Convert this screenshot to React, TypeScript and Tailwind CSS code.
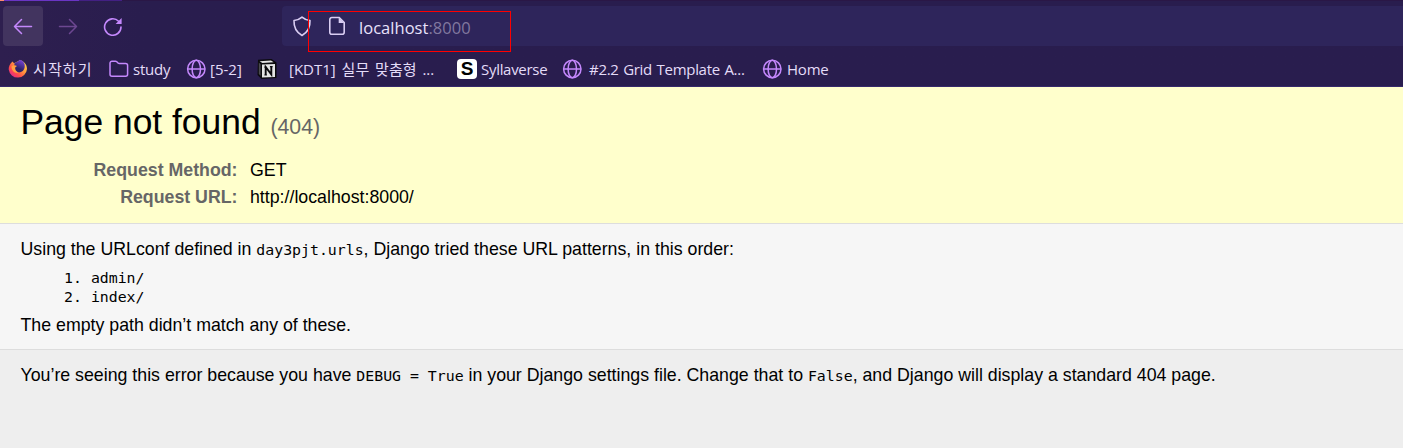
import type { ReactNode } from "react";

const accent = "#c488fc";

function Globe() {
  return (
    <svg width="20" height="20" viewBox="0 0 20 20" fill="none" stroke={accent} strokeWidth="1.5" className="shrink-0">
      <circle cx="10.3" cy="10" r="8.7" />
      <ellipse cx="10.3" cy="10" rx="4.2" ry="8.7" />
      <path d="M1.6 10h17.4" />
    </svg>
  );
}

function Folder() {
  return (
    <svg width="20" height="18" viewBox="0 0 20 18" fill="none" stroke={accent} strokeWidth="1.5" strokeLinejoin="round" className="shrink-0">
      <path d="M1 3.2a2 2 0 0 1 2-2h3.4a2 2 0 0 1 1.4.6L9 3a2 2 0 0 0 1.4.6H16.600a2 2 0 0 1 2 2v8.600a2 2 0 0 1-2 2H3a2 2 0 0 1-2-2z" />
    </svg>
  );
}

function Firefox() {
  return (
    <svg width="20" height="20" viewBox="0 0 20 20" className="shrink-0">
      <defs>
        <linearGradient id="flame" x1="0.85" y1="0.1" x2="0.15" y2="0.85">
          <stop offset="0" stopColor="#ffd84a" />
          <stop offset="0.4" stopColor="#ff9a3c" />
          <stop offset="0.75" stopColor="#ff4b4b" />
          <stop offset="1" stopColor="#e8307e" />
        </linearGradient>
        <linearGradient id="orb" x1="0.7" y1="0" x2="0.3" y2="1">
          <stop offset="0" stopColor="#7a45dc" />
          <stop offset="0.7" stopColor="#2c2268" />
        </linearGradient>
      </defs>
      <path d="M4.500 2.400 6 4.200C8 2.800 10 3 11.500 1c4 .8 7.500 4 7.500 9a9.200 9.200 0 0 1-18.300.6C.5 7.500 2 4.800 4.500 2.400z" fill="url(#flame)" />
      <path d="M6.500 4.200C8.500 3 10.500 2.500 11.800.8c3.600 1 5.400 4 4.900 7.200-.5 3.400-3 5.500-5.900 5.400-2.600 0-4.800-1.800-4.800-4.300C6 7 6.500 6 6.500 4.200z" fill="url(#orb)" />
      <path d="M3.500 7.500c1.500-1.500 3.500-1.800 5.500-.5L7.200 8.500c-.4 2.200 1 4.200 3.800 4.900-3 1.400-7.500-.7-7.500-5.900z" fill="#ffa040" />
    </svg>
  );
}

function Notion() {
  return (
    <svg width="20" height="20" viewBox="0 0 20 20" className="shrink-0">
      <path d="M1 .8 14.500 0 19.500 3.500v15.500L4.500 20 .5 16z" fill="#0b0a0d" />
      <path d="M2.600 2.200 14 1.500l2.600 1.700L5.400 4z" fill="#e4e4e4" />
      <path d="M5 5.600 18 4.900v13L5 18.600z" fill="#e4e4e4" />
      <path d="M1.800 3.600 3.600 5.200v11.600L1.800 15z" fill="#4a4a4e" />
      <path d="M8.700 16V8l5.600 7.400V7.600" fill="none" stroke="#0b0a0d" strokeWidth="1.900" />
      <path d="M7.400 8.100h2M12.900 7.700h2.700M7.400 16h2.500" fill="none" stroke="#0b0a0d" strokeWidth="1.200" />
    </svg>
  );
}

function Bookmark({ icon, children, className }: { icon: ReactNode; children: ReactNode; className: string }) {
  return (
    <div className={`flex h-full shrink-0 items-center whitespace-pre ${className}`}>
      {icon}
      <span>{children}</span>
    </div>
  );
}

function Toolbar() {
  return (
    <div className="flex h-[51px] items-start pt-[5px]">
      <div className="ml-[3px] flex size-10 items-center justify-center rounded bg-[#42345f]">
        <svg width="20" height="18" viewBox="0 0 20 18" fill="none" stroke={accent} strokeWidth="1.500" strokeLinecap="round" strokeLinejoin="round">
          <path d="M18.500 9.500H1.500M8.500 2.500 1.500 9.500l7 7" />
        </svg>
      </div>
      <div className="ml-[5px] flex size-10 items-center justify-center">
        <svg width="20" height="18" viewBox="0 0 20 18" fill="none" stroke="#6c4791" strokeWidth="1.500" strokeLinecap="round" strokeLinejoin="round">
          <path d="M1.500 9.500h17M11.500 2.500l7 7-7 7" />
        </svg>
      </div>
      <div className="ml-[5px] flex size-10 items-center justify-center">
        <svg width="20" height="20" viewBox="0 0 20 20" fill="none" stroke={accent} strokeWidth="1.600" strokeLinecap="round">
          <path d="M18 11A8.200 8.200 0 1 1 15.600 5.200" />
          <path d="M18.600 2v5.900h-6z" fill={accent} stroke="none" />
        </svg>
      </div>
      <div className="ml-[149px] flex h-10 flex-1 items-center rounded-l bg-[#2e255b] pl-[10px]">
        <svg width="20" height="21" viewBox="0 0 20 21" fill="none" stroke="#d9cdf2" strokeWidth="1.600" strokeLinejoin="round" className="shrink-0">
          <path d="M10 1.200C12 3 15 4.300 18 4.500c.3 6.600-2.200 11.700-8 15-5.800-3.300-8.300-8.400-8-15C5 4.300 8 3 10 1.200z" />
        </svg>
        <svg width="18" height="20" viewBox="0 0 18 20" className="ml-[16px] shrink-0">
          <path d="M3.800 1.500h7.400l5 5v9.800a2 2 0 0 1-2 2H3.800a2 2 0 0 1-2-2V3.500a2 2 0 0 1 2-2z" fill="none" stroke="#d9cdf2" strokeWidth="1.600" />
          <path d="M10.700 1.500v5.500h5.500z" fill="#d9cdf2" />
        </svg>
        <span className="ml-[13px] whitespace-pre pt-[3px] text-[16.500px] leading-5 tracking-[0.03px] text-[#e9e2fb]">
          localhost<span className="text-[#81789f]">:8000</span>
        </span>
      </div>
    </div>
  );
}

function Bookmarks() {
  return (
    <div className="flex h-[34px] items-center text-[15px] text-[#e4dcf8]">
      <Bookmark icon={<Firefox />} className="w-[101px] gap-[5px] pl-2 tracking-[1.100px]">시작하기</Bookmark>
      <Bookmark icon={<Folder />} className="w-[77px] gap-[4px] pl-[8px] tracking-[-0.2px]">study</Bookmark>
      <Bookmark icon={<Globe />} className="w-[71px] gap-[4px] pl-[8px]">[5-2]</Bookmark>
      <Bookmark icon={<Notion />} className="w-[200px] gap-[12px] pl-[8px] [word-spacing:2px]">[KDT1] 실무 맞춤형 ...</Bookmark>
      <Bookmark
        icon={<span className="flex size-5 items-center justify-center rounded bg-white font-['Liberation_Sans'] text-[19px] font-bold leading-5 text-black">S</span>}
        className="w-[106px] gap-[4px] pl-[8px] tracking-[-0.3px]"
      >
        Syllaverse
      </Bookmark>
      <Bookmark icon={<Globe />} className="w-[200px] gap-[7px] pl-[7px] tracking-[-0.3px] [word-spacing:1px]">#2.2 Grid Template A...</Bookmark>
      <Bookmark icon={<Globe />} className="gap-[5px] pl-[7px] tracking-[-0.2px]">Home</Bookmark>
    </div>
  );
}

function Code({ children }: { children: ReactNode }) {
  return <code className="font-['DejaVu_Sans_Mono',monospace] text-[14.850px] leading-none">{children}</code>;
}

export default function App() {
  return (
    <div className="flex h-[448px] w-[1403px] flex-col overflow-hidden bg-[#eeeeee] font-['Liberation_Sans',sans-serif] text-[17.760px] text-black">
      <header className="relative h-[87px] shrink-0 border-b border-[#36296b] bg-[#291d4e] bg-linear-to-r from-[#2e1f4f] from-0% to-[#291d4e] to-10% font-['Open_Sans','Noto_Sans_CJK_KR',sans-serif]">
        <div className="flex h-px bg-[#2a1746]">
          <div className="w-1 bg-[#ff8a70]" />
          <div className="w-[75px] bg-[#6a35c4]" />
          <div className="w-[43px] bg-[#432083]" />
        </div>
        <Toolbar />
        <Bookmarks />
        <div className="absolute left-[308px] top-[11px] h-[41px] w-[203px] border border-[#f00]" />
      </header>
      <section className="h-[137px] shrink-0 border-b border-[#dddddd] bg-[#ffffcc] pl-[20.500px] pt-[15px]">
        <h1 className="whitespace-pre text-[35.400px] leading-[40px]">
          Page not found <small className="text-[21.280px] text-[#666666]">(404)</small>
        </h1>
        <dl className="mt-[10px] grid grid-cols-[217px_auto] gap-x-[12.500px] leading-[27px]">
          <dt className="text-right font-bold text-[#666666]">Request Method:</dt>
          <dd>GET</dd>
          <dt className="text-right font-bold text-[#666666]">Request URL:</dt>
          <dd>http://localhost:8000/</dd>
        </dl>
      </section>
      <section className="h-[126px] shrink-0 border-b border-[#dddddd] bg-[#f6f6f6] pl-[20.500px] pt-[15px]">
        <p className="whitespace-pre leading-5">
          Using the URLconf defined in <Code>day3pjt.urls</Code>, Django tried these URL patterns, in this order:
        </p>
        <ol className="mt-[10px] pl-[43.500px] font-['DejaVu_Sans_Mono',monospace] text-[14.850px] leading-[19px]">
          <li className="flex gap-[9px]"><span>1.</span>admin/</li>
          <li className="flex gap-[9px]"><span>2.</span>index/</li>
        </ol>
        <p className="mt-[8px] leading-5">The empty path didn’t match any of these.</p>
      </section>
      <footer className="pl-[20.500px] pt-[15px]">
        <p className="whitespace-pre leading-5">
          You’re seeing this error because you have <Code>DEBUG = True</Code> in your Django settings file. Change that to <Code>False</Code>, and Django will display a standard 404 page.
        </p>
      </footer>
    </div>
  );
}
